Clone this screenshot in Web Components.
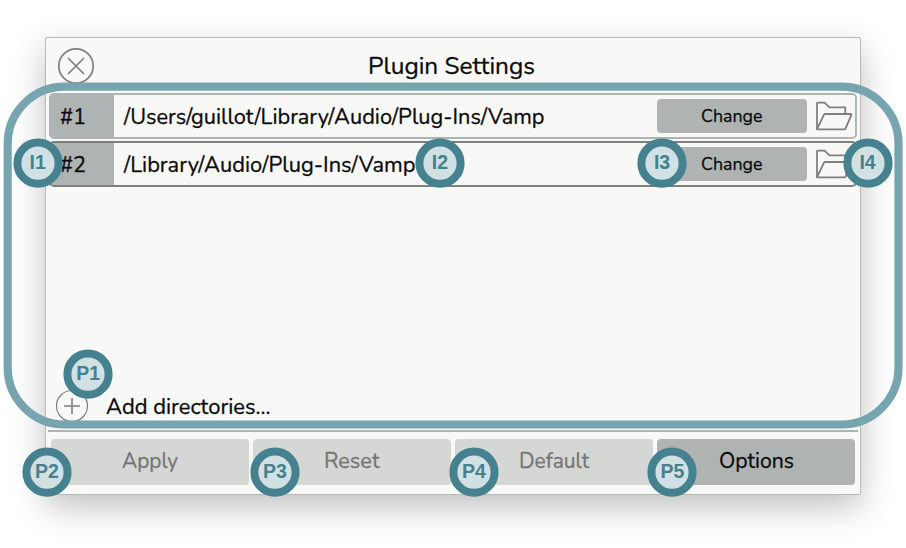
<!DOCTYPE html>
<html lang="en">
<head>
<meta charset="utf-8">
<title>Plugin Settings</title>
<style>
html,body{margin:0;width:906px;height:548px;overflow:hidden;background:#fff}
body{box-sizing:border-box;padding-top:37px;font-family:Nunito,"Nunito Sans",Lato,"Noto Sans",sans-serif;font-stretch:100%;color:#0b0b0b;position:relative}
</style>
</head>
<body>
<settings-window>
  <fit-text slot="title" width="167" size="24.5" shift="0.5">Plugin Settings</fit-text>
  <directory-row number="#1" path="/Users/guillot/Library/Audio/Plug-Ins/Vamp" width="420.5"></directory-row>
  <directory-row number="#2" path="/Library/Audio/Plug-Ins/Vamp" width="291.5" selected></directory-row>
  <fit-text slot="add" width="164.5" size="22.5" shift="0.1">Add directories...</fit-text>
  <push-button slot="actions" disabled><fit-text width="56" size="22.5">Apply</fit-text></push-button>
  <push-button slot="actions" disabled><fit-text width="55.5" size="22.5">Reset</fit-text></push-button>
  <push-button slot="actions" disabled><fit-text width="70" size="22.5">Default</fit-text></push-button>
  <push-button slot="actions"><fit-text width="75" size="22.5">Options</fit-text></push-button>
</settings-window>
<area-outline></area-outline>
<call-out x="37.7" y="163.3">I1</call-out>
<call-out x="439.9" y="163.3">I2</call-out>
<call-out x="662.1" y="163.3">I3</call-out>
<call-out x="867.6" y="163.3">I4</call-out>
<call-out x="88.2" y="374.2">P1</call-out>
<call-out x="47" y="472.2">P2</call-out>
<call-out x="275" y="472.2">P3</call-out>
<call-out x="474" y="472.2">P4</call-out>
<call-out x="672.4" y="472.2">P5</call-out>
<script>
class Base extends HTMLElement {
  constructor() { super(); this.attachShadow({mode: 'open'}); }
}

// One line of text, scaled across to a given width.
class FitText extends Base {
  connectedCallback() {
    const width = Number(this.getAttribute('width'));
    const shift = this.getAttribute('shift') || -0.6;
    this.shadowRoot.innerHTML = `<style>
      :host{display:block;flex:none;width:${width}px;white-space:pre;line-height:1.2;font-size:${this.getAttribute('size')}px;-webkit-text-stroke:.3px currentColor}
      span{display:inline-block;transform-origin:0 50%}
    </style><span><slot></slot></span>`;
    const span = this.shadowRoot.querySelector('span');
    span.style.transform = `translateY(${shift}px) scaleX(${width / span.getBoundingClientRect().width})`;
  }
}

class PushButton extends Base {
  connectedCallback() {
    this.shadowRoot.innerHTML = `<style>
      :host{display:flex;align-items:center;justify-content:center;box-sizing:border-box;border-radius:4px;background:#afb3b2;padding:0 0 2px 0}
      :host([disabled]){background:#d5d7d4;color:#747675}
    </style><slot></slot>`;
  }
}

class DirectoryRow extends Base {
  connectedCallback() {
    const a = n => this.getAttribute(n);
    this.shadowRoot.innerHTML = `<style>
      :host{display:flex;align-items:center;box-sizing:border-box;height:46px;border:2px solid #aeb3b3;border-radius:5px;overflow:hidden}
      :host([selected]){border-color:#7f7f80}
      .number{display:flex;align-items:center;box-sizing:border-box;width:63px;height:42px;padding-left:9px;background:#aeb3b3}
      .path{flex:1;padding-left:9.5px}
      push-button{width:150px;height:34px}
      svg{margin-left:8px;margin-right:2px}
    </style>
    <div class="number"><fit-text width="26" size="22.5" shift="0.1">${a('number')}</fit-text></div>
    <div class="path"><fit-text width="${a('width')}" size="22.5" shift="0.1">${a('path')}</fit-text></div>
    <push-button><fit-text width="61.5" size="18" shift="2">Change</fit-text></push-button>
    <svg width="38" height="30" viewBox="0 0 38 30" fill="none" stroke="#7f7f80" stroke-width="1.8" stroke-linejoin="round">
      <path d="M2 28V2.2Q2 1.7 2.5 1.7H9.5L14.5 6.3H30.3V12.5"/>
      <path d="M2 28L9 13.7Q9.4 13 10 13H35.2Q36.8 13 36.2 14.3L30.5 27.6Q30.2 28.3 29.5 28.3H2Z"/>
    </svg>`;
  }
}

class SettingsWindow extends Base {
  connectedCallback() {
    this.shadowRoot.innerHTML = `<style>
      :host{display:flex;flex-direction:column;box-sizing:border-box;width:816px;height:458px;margin-left:45px;border:1px solid #b9b9b9;background:#f8f8f6;border-radius:2px;box-shadow:0 12px 34px rgba(0,0,0,.25)}
      header{display:grid;grid-template-columns:60px 1fr 63px;align-items:center;height:55px}
      header svg{margin-left:11px}
      .title{justify-self:center}
      .rows{display:flex;flex-direction:column;gap:2px;padding:0 3px;flex:1}
      .add{display:flex;align-items:center;gap:17px;height:38px;padding-left:9px;margin-bottom:5px}
      .rule{height:2px;margin:0 2px;background:#aeb3b3}
      footer{display:grid;grid-template-columns:repeat(4,1fr);gap:4px;height:46px;padding:7px 5px 9px}
      svg{display:block;fill:none;stroke:#7f7f80}
    </style>
    <header>
      <svg width="38" height="38" viewBox="0 0 38 38" stroke-width="1.7"><circle cx="19" cy="19" r="17.2"/><path d="M11.5 11.5L26.5 26.5M26.5 11.5L11.5 26.5" stroke-linecap="round"/></svg>
      <div class="title"><slot name="title"></slot></div>
    </header>
    <div class="rows"><slot></slot></div>
    <div class="add">
      <svg width="34" height="34" viewBox="0 0 34 34"><circle cx="17" cy="17" r="15.5" stroke-width="1.2"/><path d="M9 17H25M17 9V25" stroke-width="1.6"/></svg>
      <slot name="add"></slot>
    </div>
    <div class="rule"></div>
    <footer><slot name="actions"></slot></footer>`;
  }
}

// Rounded outline laid over the directory list.
class AreaOutline extends Base {
  connectedCallback() {
    this.shadowRoot.innerHTML = `<style>
      :host{position:absolute;inset:0;pointer-events:none}
      svg{display:block}
    </style><svg width="906" height="548"><rect x="7.7" y="86.6" width="890.8" height="337.9" rx="57" fill="none" stroke="#76a5af" stroke-width="8.2"/></svg>`;
  }
}

// Round marker; the disc is drawn at a fractional centre.
class CallOut extends Base {
  connectedCallback() {
    const x = this.getAttribute('x') - 26, y = this.getAttribute('y') - 26;
    this.shadowRoot.innerHTML = `<style>
      :host{position:absolute;left:${x}px;top:${y}px;width:52px;height:52px;display:grid;place-items:center;color:#45818e;font:bold 19.5px/1 "Liberation Sans",Arial,sans-serif}
      svg,span{grid-area:1/1}
      span{padding-bottom:1px}
    </style><svg width="52" height="52"><circle cx="26" cy="26.2" r="20.6" fill="#d0e0e3" stroke="#45818e" stroke-width="8"/></svg><span><slot></slot></span>`;
  }
}

customElements.define('fit-text', FitText);
customElements.define('push-button', PushButton);
customElements.define('directory-row', DirectoryRow);
customElements.define('settings-window', SettingsWindow);
customElements.define('area-outline', AreaOutline);
customElements.define('call-out', CallOut);
</script>
</body>
</html>
